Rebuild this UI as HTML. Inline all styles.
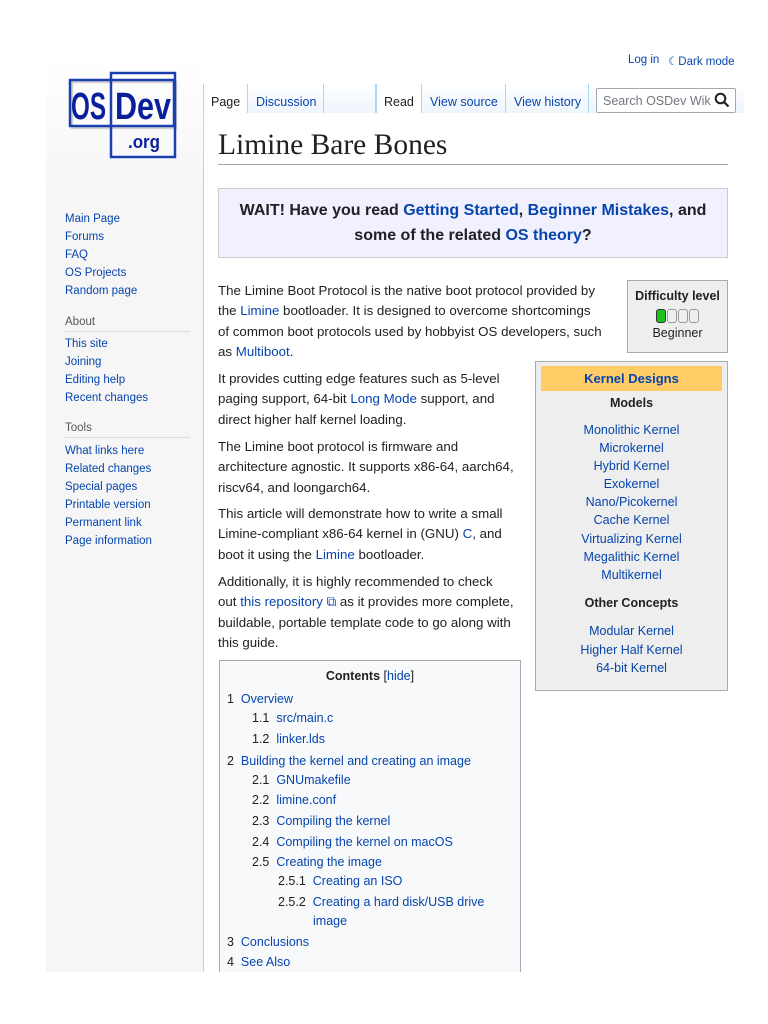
<!DOCTYPE html>
<html><head><meta charset="utf-8"><style>
*{margin:0;padding:0;box-sizing:border-box}
body{width:768px;height:1024px;background:#fff;font-family:"Liberation Sans",sans-serif;font-size:13px;color:#202122;position:relative;overflow:hidden}
a{color:#0645ad;text-decoration:none}
.abs{position:absolute;white-space:nowrap}
#side{position:absolute;left:46px;top:0;width:158px;height:972px;background:linear-gradient(#fff 0,#fff 60px,#f6f6f6 190px)}
#content{position:absolute;left:203px;top:112px;width:541px;height:860px;background:#fff;border-left:1px solid #a7d7f9}
.nav{position:absolute;left:65px;font-size:11.5px;line-height:18px}
.nav div{height:18px}
.hd{position:absolute;left:65px;font-size:11.5px;color:#54595d;width:125px;border-bottom:1px solid #ddd;padding-bottom:3px}
.tab{position:absolute;top:84px;height:29px;font-size:12.5px;padding-top:11px;background:linear-gradient(#fff,#eef5fc);border-left:1px solid #a7d7f9}
.p{position:absolute;left:218px;font-size:13.3px;line-height:20.3px;white-space:nowrap}
.toc{position:absolute;left:219px;top:660px;width:302px;height:320px;background:#f8f9fa;border:1px solid #a2a9b1;font-size:12.5px}
.toc div{position:absolute;white-space:nowrap}
.kd{position:absolute;left:535px;top:361px;width:193px;height:330px;background:#eee;border:1px solid #aaa;text-align:center;font-size:12.5px}
.kd div{position:absolute;left:0;width:191px}
</style></head><body>
<div id="side"></div>
<div id="content"></div>
<!-- logo -->
<svg class="abs" style="left:66px;top:70px" width="116" height="92" viewBox="0 0 116 92">
<rect x="6" y="12" width="104" height="46" fill="none" stroke="#aaa" stroke-width="2.5" opacity=".5"/>
<rect x="4" y="10" width="104" height="46" fill="none" stroke="#1a3fae" stroke-width="2.5"/>
<rect x="45" y="3" width="64" height="84" fill="none" stroke="#1a3fae" stroke-width="2.5"/>
<text x="5" y="49" font-family="Liberation Sans" font-weight="bold" font-size="38" fill="#0a1f9c" textLength="35" lengthAdjust="spacingAndGlyphs">OS</text>
<text x="49" y="49" font-family="Liberation Sans" font-weight="bold" font-size="38" fill="#0a1f9c" textLength="56" lengthAdjust="spacingAndGlyphs">Dev</text>
<text x="62" y="78" font-family="Liberation Sans" font-weight="bold" font-size="18" fill="#0a1f9c" textLength="32" lengthAdjust="spacingAndGlyphs">.org</text>
</svg>
<div class="abs" style="left:628px;top:54px;font-size:11.5px"><a>Log in</a></div>
<div class="abs" style="left:668px;top:54px;font-size:11.5px"><a>☾Dark mode</a></div>
<div class="tab" style="left:203px;width:42px;background:#fff;padding-left:7px;border-left:1px solid #a7d7f9">Page</div>
<div class="tab" style="left:247px;width:76px;padding-left:8px"><a>Discussion</a></div>
<div class="tab" style="left:323px;width:53px;border-right:1px solid #a7d7f9"></div>
<div class="tab" style="left:376px;width:45px;background:#fff;padding-left:7px">Read</div>
<div class="tab" style="left:421px;width:84px;padding-left:8px"><a>View source</a></div>
<div class="tab" style="left:505px;width:84px;padding-left:8px;border-right:1px solid #a7d7f9"><a>View history</a></div>
<div class="abs" style="left:589px;top:84px;width:155px;height:29px;background:linear-gradient(#fff,#eef5fc)"></div>
<div class="abs" style="left:596px;top:88px;width:140px;height:25px;border:1px solid #a2a9b1;border-radius:2px;background:#fff;font-size:12.5px;color:#72777d;padding:5px 0 0 6px;overflow:hidden">Search OSDev Wik</div>
<svg class="abs" style="left:714px;top:92px" width="16" height="16" viewBox="0 0 16 16"><circle cx="6.5" cy="6.5" r="4.8" fill="none" stroke="#202122" stroke-width="2"/><path d="M10 10l4.5 4.5" stroke="#202122" stroke-width="2.2"/></svg>
<div class="abs" style="left:218px;top:129px;font-family:'Liberation Serif',serif;font-size:29.5px">Limine Bare Bones</div>
<div class="abs" style="left:218px;top:164px;width:510px;border-top:1px solid #a2a9b1"></div>
<!-- sidebar nav -->
<div class="nav" style="top:210px"><div><a>Main Page</a></div><div><a>Forums</a></div><div><a>FAQ</a></div><div><a>OS Projects</a></div><div><a>Random page</a></div></div>
<div class="hd" style="top:316px">About</div>
<div class="nav" style="top:335px"><div><a>This site</a></div><div><a>Joining</a></div><div><a>Editing help</a></div><div><a>Recent changes</a></div></div>
<div class="hd" style="top:422px">Tools</div>
<div class="nav" style="top:442px"><div><a>What links here</a></div><div><a>Related changes</a></div><div><a>Special pages</a></div><div><a>Printable version</a></div><div><a>Permanent link</a></div><div><a>Page information</a></div></div>
<!-- WAIT box -->
<div class="abs" style="left:218px;top:188px;width:510px;height:70px;background:#f0f0ff;border:1px solid #ccc;text-align:center;font-weight:bold;font-size:16px;line-height:25px;padding-top:9px;white-space:normal">WAIT! Have you read <a>Getting Started</a>, <a>Beginner Mistakes</a>, and<br>some of the related <a>OS theory</a>?</div>
<!-- difficulty -->
<div class="abs" style="left:627px;top:280px;width:101px;height:73px;background:#eee;border:1px solid #aaa;text-align:center;font-size:12.5px">
<div style="font-weight:bold;margin-top:8px">Difficulty level</div>
<div style="margin-top:6px;height:15px"><span style="display:inline-block;width:10px;height:14px;border-radius:3px;background:#1ac21a;border:1px solid #333"></span><span style="display:inline-block;width:10px;height:14px;border-radius:3px;border:1px solid #999;margin-left:1px"></span><span style="display:inline-block;width:10px;height:14px;border-radius:3px;border:1px solid #999;margin-left:1px"></span><span style="display:inline-block;width:10px;height:14px;border-radius:3px;border:1px solid #999;margin-left:1px"></span></div>
<div style="margin-top:2px">Beginner</div></div>
<!-- kernel designs -->
<div class="kd">
<div style="left:5px;top:4px;width:181px;height:25px;background:#fc6;font-weight:bold;padding-top:5px;font-size:13px"><a>Kernel Designs</a></div>
<div style="top:34px;font-weight:bold">Models</div>
<div style="top:61px"><a>Monolithic Kernel</a></div>
<div style="top:79px"><a>Microkernel</a></div>
<div style="top:97px"><a>Hybrid Kernel</a></div>
<div style="top:115px"><a>Exokernel</a></div>
<div style="top:133px"><a>Nano/Picokernel</a></div>
<div style="top:151px"><a>Cache Kernel</a></div>
<div style="top:170px"><a>Virtualizing Kernel</a></div>
<div style="top:188px"><a>Megalithic Kernel</a></div>
<div style="top:206px"><a>Multikernel</a></div>
<div style="top:234px;font-weight:bold">Other Concepts</div>
<div style="top:262px"><a>Modular Kernel</a></div>
<div style="top:281px"><a>Higher Half Kernel</a></div>
<div style="top:299px"><a>64-bit Kernel</a></div>
</div>
<!-- paragraphs -->
<div class="p" style="top:281px">The Limine Boot Protocol is the native boot protocol provided by<br>the <a>Limine</a> bootloader. It is designed to overcome shortcomings<br>of common boot protocols used by hobbyist OS developers, such<br>as <a>Multiboot</a>.</div>
<div class="p" style="top:369px">It provides cutting edge features such as 5-level<br>paging support, 64-bit <a>Long Mode</a> support, and<br>direct higher half kernel loading.</div>
<div class="p" style="top:437px">The Limine boot protocol is firmware and<br>architecture agnostic. It supports x86-64, aarch64,<br>riscv64, and loongarch64.</div>
<div class="p" style="top:504px">This article will demonstrate how to write a small<br>Limine-compliant x86-64 kernel in (GNU) <a>C</a>, and<br>boot it using the <a>Limine</a> bootloader.</div>
<div class="p" style="top:572px">Additionally, it is highly recommended to check<br>out <a>this repository ⧉</a> as it provides more complete,<br>buildable, portable template code to go along with<br>this guide.</div>
<!-- toc -->
<div class="toc">
<div style="left:0;width:300px;text-align:center;top:8px"><b>Contents</b> [<a>hide</a>]</div>
<div style="left:7px;top:31px">1&nbsp; <a>Overview</a></div>
<div style="left:32px;top:50px">1.1&nbsp; <a>src/main.c</a></div>
<div style="left:32px;top:71px">1.2&nbsp; <a>linker.lds</a></div>
<div style="left:7px;top:93px">2&nbsp; <a>Building the kernel and creating an image</a></div>
<div style="left:32px;top:112px">2.1&nbsp; <a>GNUmakefile</a></div>
<div style="left:32px;top:132px">2.2&nbsp; <a>limine.conf</a></div>
<div style="left:32px;top:153px">2.3&nbsp; <a>Compiling the kernel</a></div>
<div style="left:32px;top:174px">2.4&nbsp; <a>Compiling the kernel on macOS</a></div>
<div style="left:32px;top:194px">2.5&nbsp; <a>Creating the image</a></div>
<div style="left:58px;top:213px">2.5.1&nbsp; <a>Creating an ISO</a></div>
<div style="left:58px;top:234px">2.5.2&nbsp; <a>Creating a hard disk/USB drive</a></div>
<div style="left:93px;top:253px"><a>image</a></div>
<div style="left:7px;top:274px">3&nbsp; <a>Conclusions</a></div>
<div style="left:7px;top:294px">4&nbsp; <a>See Also</a></div>
</div>
<div class="abs" style="left:0;top:972px;width:768px;height:52px;background:#fff"></div>
</body></html>
